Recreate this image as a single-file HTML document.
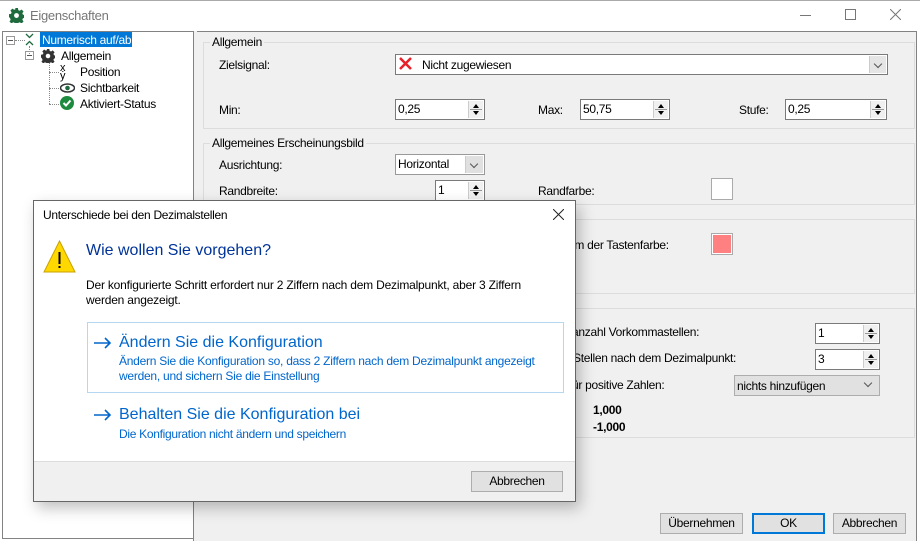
<!DOCTYPE html>
<html><head><meta charset="utf-8"><style>
*{box-sizing:border-box;margin:0;padding:0}
body{width:920px;height:541px;position:relative;overflow:hidden;background:#fff;font-family:"Liberation Sans",sans-serif;font-size:12px;color:#000}
.a{position:absolute}
.t{position:absolute;white-space:nowrap;font-size:12px;letter-spacing:-0.3px}
.grp{position:absolute;border:1px solid #dcdcdc}
.gl{position:absolute;top:-8px;left:6px;background:#f0f0f0;padding:0 2px;white-space:nowrap;letter-spacing:-0.3px}
.inp{position:absolute;background:#fff;border:1px solid #7a7a7a;height:21px;padding:2px 0 0 2px;letter-spacing:-0.3px}
.sp{position:absolute;right:1px;top:1px;width:15px;bottom:1px;border-left:1px solid #ccc;background:#f0f0f0}
.sp:before{content:"";position:absolute;left:4px;top:3px;border:3px solid transparent;border-bottom:4px solid #000;border-top:0}
.sp:after{content:"";position:absolute;left:4px;bottom:3px;border:3px solid transparent;border-top:4px solid #000;border-bottom:0}
.sp i{position:absolute;left:1px;right:1px;top:8px;height:1px;background:#999}
.cb{position:absolute;right:1px;top:1px;bottom:1px;width:17px;background:#e5e5e5;border-left:1px solid #ccc}
.cb:after{content:"";position:absolute;left:5px;top:5px;width:5px;height:5px;border-right:1px solid #555;border-bottom:1px solid #555;transform:rotate(45deg)}
.btn{position:absolute;background:#e1e1e1;border:1px solid #adadad;text-align:center;line-height:19px;letter-spacing:-0.3px}
</style></head><body>
<div class="a" style="left:0;top:0;width:920px;height:31px;background:#fff;border-top:1px solid #aaa"></div>
<svg class="a" style="left:9px;top:8px" width="15" height="15" viewBox="0 0 16 16"><path fill="#1e6b3e" d="M6.5 0h3l.4 2.2 1.6.7 1.9-1.3 2.1 2.1-1.3 1.9.7 1.6 2.1.3v3l-2.1.4-.7 1.6 1.3 1.9-2.1 2.1-1.9-1.3-1.6.7-.4 2.1h-3l-.4-2.1-1.6-.7-1.9 1.3-2.1-2.1 1.3-1.9-.7-1.6L0 9.5v-3l2.1-.3.7-1.6-1.3-1.9 2.1-2.1 1.9 1.3 1.6-.7z"/><circle cx="8" cy="8" r="2.6" fill="#fff"/></svg>
<div class="t" style="left:30px;top:8px;font-size:13px;color:#777">Eigenschaften</div>
<div class="a" style="left:800px;top:15px;width:11px;height:1px;background:#777"></div>
<div class="a" style="left:845px;top:9px;width:11px;height:11px;border:1px solid #777"></div>
<svg class="a" style="left:890px;top:9px" width="11" height="11"><path d="M0 0L11 11M11 0L0 11" stroke="#777" stroke-width="1"/></svg>
<!-- tree -->
<div class="a" style="left:2px;top:31px;width:192px;height:508px;border:1px solid #828282;background:#fff"></div>
<div class="a" style="left:193px;top:31px;width:5px;height:510px;background:#f0f0f0;border-left:1px solid #828282;border-right:1px solid #828282"></div>
<div class="a" style="left:6px;top:36px;width:9px;height:9px;border:1px solid #999"></div>
<div class="a" style="left:8px;top:40px;width:5px;height:1px;background:#555"></div>
<div class="a" style="left:15px;top:40px;width:10px;border-top:1px dotted #888"></div>
<svg class="a" style="left:25px;top:33px" width="9" height="13"><path d="M1 1l3.5 3.5L8 1M1 12l3.5-3.5L8 12" stroke="#1e6b3e" stroke-width="1.3" fill="none"/></svg>
<div class="a" style="left:40px;top:32px;width:92px;height:15px;background:#0078d7"></div>
<div class="t" style="left:42px;top:33px;color:#fff">Numerisch auf/ab</div>
<div class="a" style="left:29px;top:46px;height:8px;border-left:1px dotted #888"></div>
<div class="a" style="left:25px;top:51px;width:9px;height:9px;border:1px solid #999"></div>
<div class="a" style="left:27px;top:55px;width:5px;height:1px;background:#555"></div>
<svg class="a" style="left:41px;top:49px" width="14" height="14" viewBox="0 0 16 16"><path fill="#333" d="M6.5 0h3l.4 2.2 1.6.7 1.9-1.3 2.1 2.1-1.3 1.9.7 1.6 2.1.3v3l-2.1.4-.7 1.6 1.3 1.9-2.1 2.1-1.9-1.3-1.6.7-.4 2.1h-3l-.4-2.1-1.6-.7-1.9 1.3-2.1-2.1 1.3-1.9-.7-1.6L0 9.5v-3l2.1-.3.7-1.6-1.3-1.9 2.1-2.1 1.9 1.3 1.6-.7z"/><circle cx="8" cy="8" r="2.6" fill="#fff"/></svg>
<div class="t" style="left:61px;top:49px">Allgemein</div>
<div class="a" style="left:49px;top:63px;height:41px;border-left:1px dotted #888"></div>
<div class="a" style="left:49px;top:72px;width:10px;border-top:1px dotted #888"></div>
<div class="a" style="left:49px;top:88px;width:10px;border-top:1px dotted #888"></div>
<div class="a" style="left:49px;top:104px;width:10px;border-top:1px dotted #888"></div>
<div class="t" style="left:60px;top:64px;font-size:11px;line-height:8px">x<br>ẏ</div>
<div class="t" style="left:80px;top:65px">Position</div>
<svg class="a" style="left:60px;top:83px" width="15" height="10"><ellipse cx="7.5" cy="5" rx="7" ry="4" fill="none" stroke="#333" stroke-width="1.5"/><circle cx="7.5" cy="5" r="2.3" fill="#1e6b3e"/></svg>
<div class="t" style="left:80px;top:81px">Sichtbarkeit</div>
<svg class="a" style="left:60px;top:96px" width="14" height="14"><circle cx="7" cy="7" r="7" fill="#1e8a3e"/><path d="M3.5 7l2.5 2.5 4.5-5" stroke="#fff" stroke-width="2" fill="none"/></svg>
<div class="t" style="left:80px;top:97px">Aktiviert-Status</div>
<!-- right panel -->
<div class="a" style="left:197px;top:31px;width:723px;height:510px;background:#f0f0f0;border-top:1px solid #828282"></div>
<div class="a" style="left:916px;top:31px;width:4px;height:510px;background:#fff;border-left:1px solid #828282"></div>
<div class="grp" style="left:203px;top:42px;width:712px;height:87px"><span class="gl">Allgemein</span></div>
<div class="t" style="left:219px;top:58px">Zielsignal:</div>
<div class="inp" style="left:395px;top:54px;width:493px;height:21px;padding-left:26px;padding-top:3px">Nicht zugewiesen<div class="cb"></div></div>
<svg class="a" style="left:399px;top:57px" width="13" height="13"><path d="M1 1L12 12M12 1L1 12" stroke="#e8202a" stroke-width="2.5"/></svg>
<div class="t" style="left:219px;top:103px">Min:</div>
<div class="inp" style="left:395px;top:99px;width:90px">0,25<div class="sp"><i></i></div></div>
<div class="t" style="left:538px;top:103px">Max:</div>
<div class="inp" style="left:580px;top:99px;width:90px">50,75<div class="sp"><i></i></div></div>
<div class="t" style="left:739px;top:103px">Stufe:</div>
<div class="inp" style="left:785px;top:99px;width:102px">0,25<div class="sp"><i></i></div></div>
<div class="grp" style="left:203px;top:143px;width:712px;height:62px"><span class="gl">Allgemeines Erscheinungsbild</span></div>
<div class="t" style="left:219px;top:158px">Ausrichtung:</div>
<div class="inp" style="left:395px;top:154px;width:90px;border-color:#999">Horizontal<div class="cb" style="width:18px;background:#e0e0e0"></div></div>
<div class="t" style="left:219px;top:184px">Randbreite:</div>
<div class="inp" style="left:435px;top:180px;width:50px">1<div class="sp"><i></i></div></div>
<div class="t" style="left:538px;top:184px">Randfarbe:</div>
<div class="a" style="left:711px;top:178px;width:22px;height:22px;border:1px solid #aaa;background:#fff"></div>
<div class="grp" style="left:203px;top:219px;width:712px;height:75px"></div>
<div class="t" style="left:568px;top:238px">em der Tastenfarbe:</div>
<div class="a" style="left:711px;top:233px;width:22px;height:22px;border:1px solid #aaa;background:#ff8080;box-shadow:inset 0 0 0 1px #fff"></div>
<div class="grp" style="left:203px;top:308px;width:712px;height:130px"></div>
<div class="t" style="left:572px;top:325px">anzahl Vorkommastellen:</div>
<div class="inp" style="left:815px;top:323px;width:65px">1<div class="sp"><i></i></div></div>
<div class="t" style="left:573px;top:351px">Stellen nach dem Dezimalpunkt:</div>
<div class="inp" style="left:815px;top:349px;width:65px">3<div class="sp"><i></i></div></div>
<div class="t" style="left:572px;top:378px">ür positive Zahlen:</div>
<div class="inp" style="left:734px;top:375px;width:146px;background:#e1e1e1;border-color:#adadad;padding-top:3px">nichts hinzufügen</div>
<div class="a" style="left:865px;top:380px;width:6px;height:6px;border-right:1px solid #555;border-bottom:1px solid #555;transform:rotate(45deg)"></div>
<div class="t" style="left:593px;top:403px;font-weight:bold">1,000</div>
<div class="t" style="left:593px;top:420px;font-weight:bold">-1,000</div>
<div class="btn" style="left:660px;top:513px;width:83px;height:21px">Übernehmen</div>
<div class="btn" style="left:752px;top:513px;width:73px;height:21px;border:2px solid #0078d7;line-height:17px">OK</div>
<div class="btn" style="left:833px;top:513px;width:73px;height:21px">Abbrechen</div>
<!-- dialog -->
<div class="a" style="left:33px;top:200px;width:543px;height:302px;background:#fff;border:1px solid #666;box-shadow:4px 6px 14px rgba(0,0,0,0.25)"></div>
<div class="t" style="left:43px;top:208px;font-size:12px">Unterschiede bei den Dezimalstellen</div>
<svg class="a" style="left:553px;top:209px" width="11" height="11"><path d="M0 0L11 11M11 0L0 11" stroke="#222" stroke-width="1"/></svg>
<svg class="a" style="left:43px;top:240px" width="33" height="33"><path d="M16.5 1L32 32H1z" fill="#ffd800" stroke="#c8a000" stroke-width="1"/><rect x="15.5" y="12" width="2" height="12" fill="#000"/><rect x="15.5" y="26" width="2" height="2" fill="#000"/></svg>
<div class="t" style="left:86px;top:242px;font-size:16px;color:#003399;letter-spacing:0">Wie wollen Sie vorgehen?</div>
<div class="t" style="left:86px;top:278px;letter-spacing:-0.2px;line-height:15px">Der konfigurierte Schritt erfordert nur 2 Ziffern nach dem Dezimalpunkt, aber 3 Ziffern<br>werden angezeigt.</div>
<div class="a" style="left:87px;top:322px;width:477px;height:71px;border:1px solid #b5d7f0"></div>
<svg class="a" style="left:94px;top:337px" width="18" height="12"><path d="M0 6H16M11 1l5 5-5 5" stroke="#0066cc" stroke-width="1.6" fill="none"/></svg>
<div class="t" style="left:119px;top:334px;font-size:16px;color:#0066cc;letter-spacing:0">Ändern Sie die Konfiguration</div>
<div class="t" style="left:119px;top:354px;color:#0066cc;line-height:15px;letter-spacing:-0.25px">Ändern Sie die Konfiguration so, dass 2 Ziffern nach dem Dezimalpunkt angezeigt<br>werden, und sichern Sie die Einstellung</div>
<svg class="a" style="left:94px;top:409px" width="18" height="12"><path d="M0 6H16M11 1l5 5-5 5" stroke="#0066cc" stroke-width="1.6" fill="none"/></svg>
<div class="t" style="left:119px;top:406px;font-size:16px;color:#0066cc;letter-spacing:0">Behalten Sie die Konfiguration bei</div>
<div class="t" style="left:119px;top:427px;color:#0066cc">Die Konfiguration nicht ändern und speichern</div>
<div class="a" style="left:34px;top:461px;width:541px;height:40px;background:#f0f0f0;border-top:1px solid #ddd"></div>
<div class="btn" style="left:471px;top:471px;width:92px;height:21px">Abbrechen</div>
</body></html>
